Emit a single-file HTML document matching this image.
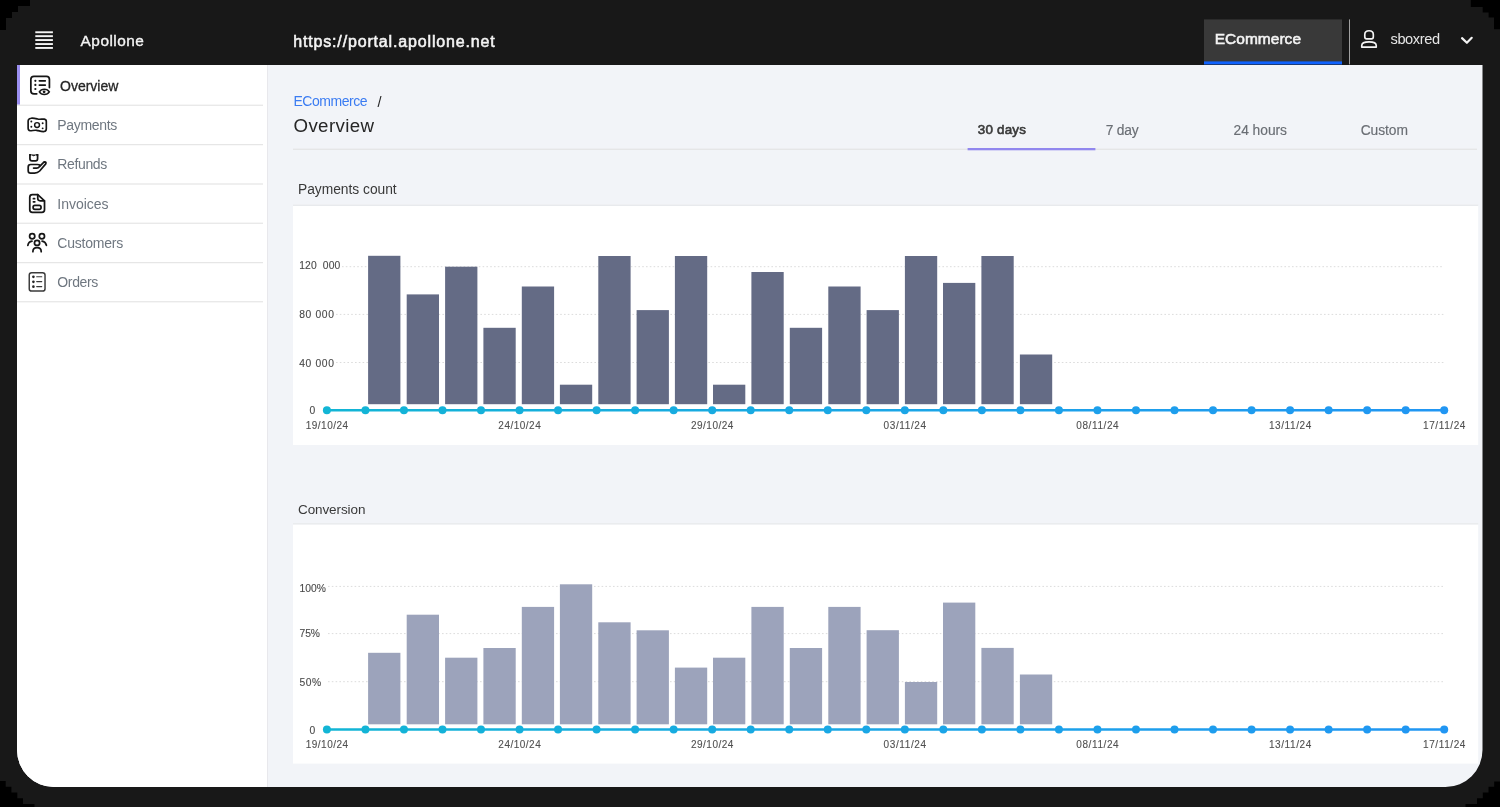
<!DOCTYPE html>
<html><head><meta charset="utf-8"><title>Apollone</title><style>
html,body{margin:0;padding:0;background:#181818;width:1500px;height:807px;overflow:hidden}
svg text{font-family:"Liberation Sans", sans-serif}
</style></head><body>
<svg width="1500" height="807" viewBox="0 0 1500 807" style="display:block;will-change:transform">
<defs><linearGradient id="g1" gradientUnits="userSpaceOnUse" x1="326" y1="0" x2="1445" y2="0"><stop offset="0" stop-color="#12b5d5"/><stop offset="0.5" stop-color="#1aa6e6"/><stop offset="1" stop-color="#2196f3"/></linearGradient><linearGradient id="g2" gradientUnits="userSpaceOnUse" x1="326" y1="0" x2="1445" y2="0"><stop offset="0" stop-color="#12b5d5"/><stop offset="0.5" stop-color="#1aa6e6"/><stop offset="1" stop-color="#2196f3"/></linearGradient>
<clipPath id="contentclip"><path d="M17,65 H1482.5 V750 A37,37 0 0 1 1445.5,787 H54 A37,37 0 0 1 17,750 Z"/></clipPath>
</defs>
<rect x="0" y="0" width="1500" height="807" fill="#181818"/>
<path fill="#000" d="M0,0 H30 V6 H18 V12 H12 V18 H6 V30 H0 Z"/>
<path fill="#000" d="M1500,0 H1470.8 V7 H1482.7 V12.4 H1488.6 V17.6 H1494 V29.3 H1500 Z"/>
<path fill="#000" d="M1500,807 H1465.5 V804 H1477 V798.2 H1482.8 V792.5 H1488.5 V786.8 H1494.2 V781.4 H1500 Z"/>
<path fill="#000" d="M0,807 V781.1 H5.7 V786.8 H11.4 V792.5 H17.3 V798.2 H23 V803.9 H34.5 V807 Z"/>
<!-- header -->
<g fill="#f4f4f4">
<rect x="35.3" y="31.3" width="17.6" height="1.9"/>
<rect x="35.3" y="35.2" width="17.6" height="1.9"/>
<rect x="35.3" y="39.1" width="17.6" height="1.9"/>
<rect x="35.3" y="43.1" width="17.6" height="1.9"/>
<rect x="35.3" y="47.0" width="17.6" height="1.9"/>
</g>
<text x="80.6" y="45.5" font-size="15.4" fill="#f4f4f4" stroke="#f4f4f4" stroke-width="0.35" textLength="63.3" lengthAdjust="spacing">Apollone</text>
<text x="293.2" y="46.9" font-size="16" fill="#f4f4f4" stroke="#f4f4f4" stroke-width="0.55" textLength="201.5" lengthAdjust="spacing">https://portal.apollone.net</text>
<rect x="1204" y="19.4" width="138" height="45" fill="#393939"/>
<rect x="1204" y="61.4" width="138" height="3" fill="#0f62fe"/>
<text x="1214.7" y="44.3" font-size="15.5" fill="#f4f4f4" stroke="#f4f4f4" stroke-width="0.55" textLength="86.3" lengthAdjust="spacing">ECommerce</text>
<rect x="1349" y="19.4" width="1" height="45" fill="#a0a0a0"/>
<text x="1390.5" y="44.2" font-size="14.6" fill="#e6e6e6" textLength="49.5" lengthAdjust="spacing">sboxred</text>
<!-- content -->
<g clip-path="url(#contentclip)">
<rect x="17" y="65" width="1466" height="722" fill="#f2f4f8"/>
<rect x="17" y="65" width="250" height="722" fill="#ffffff"/>
<rect x="267" y="65" width="1" height="722" fill="#e8e8ec"/>
</g>
<!-- sidebar -->
<rect x="17" y="65" width="3" height="39.7" fill="#9b8ff0"/>
<g fill="#e0e0e0">
<rect x="17" y="104.7" width="246" height="1"/>
<rect x="17" y="144.2" width="246" height="1"/>
<rect x="17" y="183.5" width="246" height="1"/>
<rect x="17" y="222.7" width="246" height="1"/>
<rect x="17" y="262.2" width="246" height="1"/>
<rect x="17" y="301.3" width="246" height="1"/>
</g>
<text x="60.1" y="90.7" font-size="14" fill="#262626" stroke="#262626" stroke-width="0.3" textLength="58.2" lengthAdjust="spacing">Overview</text>
<text x="57.3" y="130.0" font-size="14" fill="#6f7780" textLength="60" lengthAdjust="spacing">Payments</text>
<text x="57.3" y="169.4" font-size="14" fill="#6f7780" textLength="50" lengthAdjust="spacing">Refunds</text>
<text x="57.3" y="208.7" font-size="14" fill="#6f7780" textLength="51.3" lengthAdjust="spacing">Invoices</text>
<text x="57.3" y="248.1" font-size="14" fill="#6f7780" textLength="66" lengthAdjust="spacing">Customers</text>
<text x="57.3" y="287.4" font-size="14" fill="#6f7780" textLength="41" lengthAdjust="spacing">Orders</text>
<!-- overview icon -->
<svg x="26" y="72" width="28" height="28" viewBox="0 0 807 807" fill="none" stroke="#161616" stroke-width="50" stroke-linecap="round">
<path d="M310,630 H230 Q140,630 140,540 V210 Q140,125 230,125 H590 Q675,125 675,210 V450"/>
<circle cx="270" cy="255" r="32" fill="#161616" stroke="none"/>
<circle cx="270" cy="372" r="32" fill="#161616" stroke="none"/>
<circle cx="270" cy="490" r="32" fill="#161616" stroke="none"/>
<path d="M385,255 H555 M385,375 H555"/>
<path d="M385,572 C445,472 610,472 672,572 C610,672 445,672 385,572 Z" stroke-width="46"/>
<circle cx="522" cy="572" r="40" fill="#161616" stroke="none"/>
</svg>
<!-- payments icon -->
<svg x="23" y="111" width="28" height="28" viewBox="0 0 807 807" fill="none" stroke="#161616" stroke-width="48" stroke-linecap="round" stroke-linejoin="round">
<path d="M230,208 C300,195 360,215 420,232 C480,248 560,228 615,235 Q672,245 672,305 V515 Q672,585 610,592 C540,598 470,575 400,558 C330,542 265,572 205,568 Q148,562 148,500 V290 Q148,218 230,208 Z"/>
<circle cx="405" cy="405" r="70" stroke-width="42"/>
<circle cx="240" cy="300" r="28" fill="#161616" stroke="none"/>
<circle cx="240" cy="455" r="28" fill="#161616" stroke="none"/>
<circle cx="567" cy="355" r="28" fill="#161616" stroke="none"/>
<circle cx="567" cy="500" r="28" fill="#161616" stroke="none"/>
</svg>
<!-- refunds icon -->
<svg x="23" y="150" width="28" height="28" viewBox="0 0 807 807" fill="none" stroke="#161616" stroke-width="50" stroke-linecap="round" stroke-linejoin="round">
<path d="M200,140 V255 Q200,315 260,315 H360 Q420,315 420,255 V140"/>
<path d="M200,140 H225 M395,140 H420"/>
<path d="M262,148 Q310,200 358,148 Z" fill="#161616" stroke-width="20"/>
<path d="M480,430 Q460,420 420,418 H220 Q150,418 150,488 V595 Q150,665 220,665 H335 Q420,665 480,605 L655,400 Q680,350 625,345 Q600,348 580,370 L470,485 Q445,520 395,520 H305"/>
</svg>
<!-- invoices icon -->
<svg x="23" y="189" width="28" height="28" viewBox="0 0 807 807" fill="none" stroke="#161616" stroke-width="50" stroke-linecap="round" stroke-linejoin="round">
<path d="M425,160 H270 Q195,160 195,235 V600 Q195,675 270,675 H545 Q620,675 620,600 V340 Z"/>
<path d="M425,165 V270 Q425,340 495,340 H615"/>
<path d="M300,278 H335 M300,370 H340"/>
<rect x="292" y="472" width="228" height="112" rx="50"/>
</svg>
<!-- customers icon -->
<svg x="23" y="229" width="28" height="28" viewBox="0 0 807 807" fill="none" stroke="#161616" stroke-width="50" stroke-linecap="round">
<circle cx="265" cy="210" r="75"/>
<circle cx="545" cy="210" r="75"/>
<circle cx="405" cy="400" r="75"/>
<path d="M140,470 Q160,365 260,350"/>
<path d="M550,350 Q650,365 675,470"/>
<path d="M285,655 Q285,535 405,535 Q525,535 525,655"/>
</svg>
<!-- orders icon -->
<svg x="23" y="268" width="28" height="28" viewBox="0 0 807 807" fill="none" stroke="#3a3a3a" stroke-width="42" stroke-linecap="round">
<rect x="180" y="135" width="455" height="530" rx="70"/>
<circle cx="300" cy="255" r="38" fill="#262626" stroke="none"/>
<circle cx="300" cy="398" r="38" fill="#262626" stroke="none"/>
<circle cx="300" cy="538" r="38" fill="#262626" stroke="none"/>
<path d="M395,252 H540 M395,392 H540 M395,535 H540" stroke-width="34"/>
</svg>
<!-- user icon -->
<svg x="1355" y="25" width="28" height="28" viewBox="0 0 807 807" fill="none" stroke="#f4f4f4" stroke-width="48" stroke-linejoin="round">
<path d="M335,400 H475 Q528,400 528,340 V275 Q528,165 405,165 Q282,165 282,275 V340 Q282,400 335,400 Z"/>
<path d="M195,640 V590 Q195,485 405,485 Q612,485 612,590 V640 Z"/>
</svg>
<!-- chevron -->
<svg x="1453" y="26" width="28" height="28" viewBox="0 0 807 807" fill="none" stroke="#f4f4f4" stroke-width="62" stroke-linecap="round" stroke-linejoin="round">
<path d="M260,350 L400,485 L540,340"/>
</svg>

<!-- breadcrumb -->
<text x="293.5" y="106" font-size="14" fill="#3b7cf2" textLength="74" lengthAdjust="spacing">ECommerce</text>
<text x="377.6" y="106.5" font-size="14.5" fill="#262626">/</text>
<text x="293.5" y="132.2" font-size="18.7" fill="#262626" textLength="80.5" lengthAdjust="spacing">Overview</text>
<rect x="293" y="148.7" width="1184" height="1" fill="#e0e0e0"/>
<rect x="967.6" y="148" width="127.8" height="2.3" fill="#9187ee"/>
<text x="977.7" y="134.2" font-size="13.4" fill="#393939" stroke="#393939" stroke-width="0.6" textLength="48.3" lengthAdjust="spacing">30 days</text>
<text x="1105.7" y="134.8" font-size="13.8" fill="#6a6e74" stroke="#6a6e74" stroke-width="0.15" textLength="33" lengthAdjust="spacing">7 day</text>
<text x="1233.5" y="134.8" font-size="13.8" fill="#6a6e74" stroke="#6a6e74" stroke-width="0.15" textLength="53.5" lengthAdjust="spacing">24 hours</text>
<text x="1360.7" y="134.8" font-size="13.8" fill="#6a6e74" stroke="#6a6e74" stroke-width="0.15" textLength="47.3" lengthAdjust="spacing">Custom</text>
<!-- chart 1 -->
<text x="298" y="194.3" font-size="13.8" fill="#393939" textLength="98.7" lengthAdjust="spacing">Payments count</text>
<rect x="293" y="204.7" width="1185.2" height="240.3" fill="#ffffff"/>
<rect x="293" y="204.7" width="1185.2" height="1" fill="#dfe1e5"/>
<line x1="342" y1="266.7" x2="1443.5" y2="266.7" stroke="#dcdcdc" stroke-width="1" stroke-dasharray="1.6 2.2"/>
<line x1="336" y1="314.4" x2="1443.5" y2="314.4" stroke="#dcdcdc" stroke-width="1" stroke-dasharray="1.6 2.2"/>
<line x1="336" y1="362.5" x2="1443.5" y2="362.5" stroke="#dcdcdc" stroke-width="1" stroke-dasharray="1.6 2.2"/>
<rect x="368.1" y="255.8" width="32.3" height="148.4" fill="#646b85"/>
<rect x="406.7" y="294.4" width="32.3" height="109.8" fill="#646b85"/>
<rect x="445.1" y="266.7" width="32.3" height="137.5" fill="#646b85"/>
<rect x="483.4" y="327.8" width="32.3" height="76.4" fill="#646b85"/>
<rect x="521.8" y="286.5" width="32.3" height="117.7" fill="#646b85"/>
<rect x="559.9" y="384.7" width="32.3" height="19.5" fill="#646b85"/>
<rect x="598.3" y="256" width="32.3" height="148.2" fill="#646b85"/>
<rect x="636.6" y="310.1" width="32.3" height="94.1" fill="#646b85"/>
<rect x="674.9" y="256" width="32.3" height="148.2" fill="#646b85"/>
<rect x="713" y="384.7" width="32.3" height="19.5" fill="#646b85"/>
<rect x="751.4" y="272" width="32.3" height="132.2" fill="#646b85"/>
<rect x="789.8" y="327.8" width="32.3" height="76.4" fill="#646b85"/>
<rect x="828.3" y="286.5" width="32.3" height="117.7" fill="#646b85"/>
<rect x="866.6" y="310.1" width="32.3" height="94.1" fill="#646b85"/>
<rect x="904.9" y="256" width="32.3" height="148.2" fill="#646b85"/>
<rect x="943" y="282.9" width="32.3" height="121.3" fill="#646b85"/>
<rect x="981.4" y="256" width="32.3" height="148.2" fill="#646b85"/>
<rect x="1019.9" y="354.5" width="32.3" height="49.7" fill="#646b85"/>
<line x1="326.9" y1="410.2" x2="1444.2" y2="410.2" stroke="url(#g1)" stroke-width="2.4"/>
<circle cx="326.90" cy="410.2" r="4" fill="url(#g1)"/>
<circle cx="365.43" cy="410.2" r="4" fill="url(#g1)"/>
<circle cx="403.96" cy="410.2" r="4" fill="url(#g1)"/>
<circle cx="442.48" cy="410.2" r="4" fill="url(#g1)"/>
<circle cx="481.01" cy="410.2" r="4" fill="url(#g1)"/>
<circle cx="519.54" cy="410.2" r="4" fill="url(#g1)"/>
<circle cx="558.07" cy="410.2" r="4" fill="url(#g1)"/>
<circle cx="596.59" cy="410.2" r="4" fill="url(#g1)"/>
<circle cx="635.12" cy="410.2" r="4" fill="url(#g1)"/>
<circle cx="673.65" cy="410.2" r="4" fill="url(#g1)"/>
<circle cx="712.18" cy="410.2" r="4" fill="url(#g1)"/>
<circle cx="750.70" cy="410.2" r="4" fill="url(#g1)"/>
<circle cx="789.23" cy="410.2" r="4" fill="url(#g1)"/>
<circle cx="827.76" cy="410.2" r="4" fill="url(#g1)"/>
<circle cx="866.29" cy="410.2" r="4" fill="url(#g1)"/>
<circle cx="904.81" cy="410.2" r="4" fill="url(#g1)"/>
<circle cx="943.34" cy="410.2" r="4" fill="url(#g1)"/>
<circle cx="981.87" cy="410.2" r="4" fill="url(#g1)"/>
<circle cx="1020.40" cy="410.2" r="4" fill="url(#g1)"/>
<circle cx="1058.92" cy="410.2" r="4" fill="url(#g1)"/>
<circle cx="1097.45" cy="410.2" r="4" fill="url(#g1)"/>
<circle cx="1135.98" cy="410.2" r="4" fill="url(#g1)"/>
<circle cx="1174.51" cy="410.2" r="4" fill="url(#g1)"/>
<circle cx="1213.03" cy="410.2" r="4" fill="url(#g1)"/>
<circle cx="1251.56" cy="410.2" r="4" fill="url(#g1)"/>
<circle cx="1290.09" cy="410.2" r="4" fill="url(#g1)"/>
<circle cx="1328.62" cy="410.2" r="4" fill="url(#g1)"/>
<circle cx="1367.14" cy="410.2" r="4" fill="url(#g1)"/>
<circle cx="1405.67" cy="410.2" r="4" fill="url(#g1)"/>
<circle cx="1444.20" cy="410.2" r="4" fill="url(#g1)"/>
<text x="305.70" y="429.2" font-size="10" fill="#505050" stroke="#505050" stroke-width="0.1" textLength="42.4" lengthAdjust="spacing">19/10/24</text>
<text x="498.34" y="429.2" font-size="10" fill="#505050" stroke="#505050" stroke-width="0.1" textLength="42.4" lengthAdjust="spacing">24/10/24</text>
<text x="690.98" y="429.2" font-size="10" fill="#505050" stroke="#505050" stroke-width="0.1" textLength="42.4" lengthAdjust="spacing">29/10/24</text>
<text x="883.61" y="429.2" font-size="10" fill="#505050" stroke="#505050" stroke-width="0.1" textLength="42.4" lengthAdjust="spacing">03/11/24</text>
<text x="1076.25" y="429.2" font-size="10" fill="#505050" stroke="#505050" stroke-width="0.1" textLength="42.4" lengthAdjust="spacing">08/11/24</text>
<text x="1268.89" y="429.2" font-size="10" fill="#505050" stroke="#505050" stroke-width="0.1" textLength="42.4" lengthAdjust="spacing">13/11/24</text>
<text x="1423.00" y="429.2" font-size="10" fill="#505050" stroke="#505050" stroke-width="0.1" textLength="42.4" lengthAdjust="spacing">17/11/24</text>
<!-- chart 2 -->
<text x="298" y="513.5" font-size="13.5" fill="#393939" textLength="67.4" lengthAdjust="spacing">Conversion</text>
<rect x="293" y="523.4" width="1185.2" height="240.2" fill="#ffffff"/>
<rect x="293" y="523.4" width="1185.2" height="1" fill="#dfe1e5"/>
<line x1="328" y1="586.4" x2="1443.5" y2="586.4" stroke="#dcdcdc" stroke-width="1" stroke-dasharray="1.6 2.2"/>
<line x1="328" y1="633.6" x2="1443.5" y2="633.6" stroke="#dcdcdc" stroke-width="1" stroke-dasharray="1.6 2.2"/>
<line x1="328" y1="681.7" x2="1443.5" y2="681.7" stroke="#dcdcdc" stroke-width="1" stroke-dasharray="1.6 2.2"/>
<rect x="368.1" y="652.8" width="32.3" height="71.5" fill="#9ca3bb"/>
<rect x="406.7" y="614.7" width="32.3" height="109.6" fill="#9ca3bb"/>
<rect x="445.1" y="657.7" width="32.3" height="66.6" fill="#9ca3bb"/>
<rect x="483.4" y="648" width="32.3" height="76.3" fill="#9ca3bb"/>
<rect x="521.8" y="606.9" width="32.3" height="117.4" fill="#9ca3bb"/>
<rect x="559.9" y="584.3" width="32.3" height="140.0" fill="#9ca3bb"/>
<rect x="598.3" y="622.3" width="32.3" height="102.0" fill="#9ca3bb"/>
<rect x="636.6" y="630.3" width="32.3" height="94.0" fill="#9ca3bb"/>
<rect x="674.9" y="667.6" width="32.3" height="56.7" fill="#9ca3bb"/>
<rect x="713" y="657.7" width="32.3" height="66.6" fill="#9ca3bb"/>
<rect x="751.4" y="606.9" width="32.3" height="117.4" fill="#9ca3bb"/>
<rect x="789.8" y="648" width="32.3" height="76.3" fill="#9ca3bb"/>
<rect x="828.3" y="606.9" width="32.3" height="117.4" fill="#9ca3bb"/>
<rect x="866.6" y="630.2" width="32.3" height="94.1" fill="#9ca3bb"/>
<rect x="904.9" y="682" width="32.3" height="42.3" fill="#9ca3bb"/>
<rect x="943" y="602.6" width="32.3" height="121.7" fill="#9ca3bb"/>
<rect x="981.4" y="647.9" width="32.3" height="76.4" fill="#9ca3bb"/>
<rect x="1019.9" y="674.5" width="32.3" height="49.8" fill="#9ca3bb"/>
<line x1="326.9" y1="729.5" x2="1444.2" y2="729.5" stroke="url(#g2)" stroke-width="2.4"/>
<circle cx="326.90" cy="729.5" r="4" fill="url(#g2)"/>
<circle cx="365.43" cy="729.5" r="4" fill="url(#g2)"/>
<circle cx="403.96" cy="729.5" r="4" fill="url(#g2)"/>
<circle cx="442.48" cy="729.5" r="4" fill="url(#g2)"/>
<circle cx="481.01" cy="729.5" r="4" fill="url(#g2)"/>
<circle cx="519.54" cy="729.5" r="4" fill="url(#g2)"/>
<circle cx="558.07" cy="729.5" r="4" fill="url(#g2)"/>
<circle cx="596.59" cy="729.5" r="4" fill="url(#g2)"/>
<circle cx="635.12" cy="729.5" r="4" fill="url(#g2)"/>
<circle cx="673.65" cy="729.5" r="4" fill="url(#g2)"/>
<circle cx="712.18" cy="729.5" r="4" fill="url(#g2)"/>
<circle cx="750.70" cy="729.5" r="4" fill="url(#g2)"/>
<circle cx="789.23" cy="729.5" r="4" fill="url(#g2)"/>
<circle cx="827.76" cy="729.5" r="4" fill="url(#g2)"/>
<circle cx="866.29" cy="729.5" r="4" fill="url(#g2)"/>
<circle cx="904.81" cy="729.5" r="4" fill="url(#g2)"/>
<circle cx="943.34" cy="729.5" r="4" fill="url(#g2)"/>
<circle cx="981.87" cy="729.5" r="4" fill="url(#g2)"/>
<circle cx="1020.40" cy="729.5" r="4" fill="url(#g2)"/>
<circle cx="1058.92" cy="729.5" r="4" fill="url(#g2)"/>
<circle cx="1097.45" cy="729.5" r="4" fill="url(#g2)"/>
<circle cx="1135.98" cy="729.5" r="4" fill="url(#g2)"/>
<circle cx="1174.51" cy="729.5" r="4" fill="url(#g2)"/>
<circle cx="1213.03" cy="729.5" r="4" fill="url(#g2)"/>
<circle cx="1251.56" cy="729.5" r="4" fill="url(#g2)"/>
<circle cx="1290.09" cy="729.5" r="4" fill="url(#g2)"/>
<circle cx="1328.62" cy="729.5" r="4" fill="url(#g2)"/>
<circle cx="1367.14" cy="729.5" r="4" fill="url(#g2)"/>
<circle cx="1405.67" cy="729.5" r="4" fill="url(#g2)"/>
<circle cx="1444.20" cy="729.5" r="4" fill="url(#g2)"/>
<text x="305.70" y="748.3" font-size="10" fill="#505050" stroke="#505050" stroke-width="0.1" textLength="42.4" lengthAdjust="spacing">19/10/24</text>
<text x="498.34" y="748.3" font-size="10" fill="#505050" stroke="#505050" stroke-width="0.1" textLength="42.4" lengthAdjust="spacing">24/10/24</text>
<text x="690.98" y="748.3" font-size="10" fill="#505050" stroke="#505050" stroke-width="0.1" textLength="42.4" lengthAdjust="spacing">29/10/24</text>
<text x="883.61" y="748.3" font-size="10" fill="#505050" stroke="#505050" stroke-width="0.1" textLength="42.4" lengthAdjust="spacing">03/11/24</text>
<text x="1076.25" y="748.3" font-size="10" fill="#505050" stroke="#505050" stroke-width="0.1" textLength="42.4" lengthAdjust="spacing">08/11/24</text>
<text x="1268.89" y="748.3" font-size="10" fill="#505050" stroke="#505050" stroke-width="0.1" textLength="42.4" lengthAdjust="spacing">13/11/24</text>
<text x="1423.00" y="748.3" font-size="10" fill="#505050" stroke="#505050" stroke-width="0.1" textLength="42.4" lengthAdjust="spacing">17/11/24</text>
<text x="299.2" y="269.1" font-size="10.3" fill="#4a4a4a" stroke="#4a4a4a" stroke-width="0.12" textLength="41.1" lengthAdjust="spacing">120&#160;&#160;000</text>
<text x="299.2" y="318.2" font-size="10.3" fill="#4a4a4a" stroke="#4a4a4a" stroke-width="0.12" textLength="34.7" lengthAdjust="spacing">80&#160;000</text>
<text x="299.2" y="366.7" font-size="10.3" fill="#4a4a4a" stroke="#4a4a4a" stroke-width="0.12" textLength="34.7" lengthAdjust="spacing">40&#160;000</text>
<text x="309.6" y="413.6" font-size="10.3" fill="#4a4a4a" stroke="#4a4a4a" stroke-width="0.12">0</text>
<text x="299.5" y="592.1" font-size="10.3" fill="#4a4a4a" stroke="#4a4a4a" stroke-width="0.12" textLength="26.3" lengthAdjust="spacing">100%</text>
<text x="299.5" y="637" font-size="10.3" fill="#4a4a4a" stroke="#4a4a4a" stroke-width="0.12" textLength="20.5" lengthAdjust="spacing">75%</text>
<text x="299.5" y="685.9" font-size="10.3" fill="#4a4a4a" stroke="#4a4a4a" stroke-width="0.12" textLength="21.7" lengthAdjust="spacing">50%</text>
<text x="309.6" y="733.5" font-size="10.3" fill="#4a4a4a" stroke="#4a4a4a" stroke-width="0.12">0</text>
</svg>
</body></html>
